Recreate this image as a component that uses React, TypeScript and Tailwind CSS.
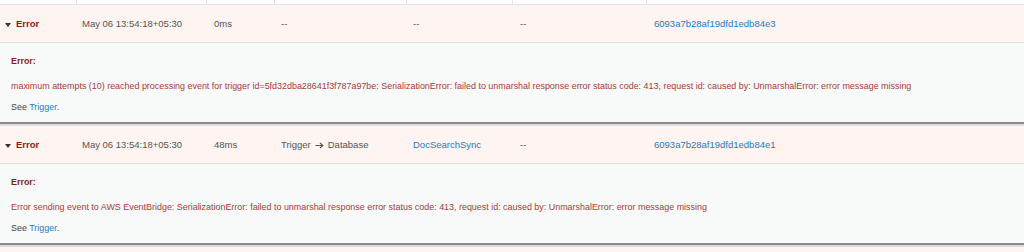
const font = { fontFamily: '"Liberation Sans", Arial, sans-serif' };

const rows = [
  {
    time: "May 06 13:54:18+05:30",
    duration: "0ms",
    source: null as null | string,
    name: null as null | string,
    id: "6093a7b28af19dfd1edb84e3",
    message:
      "maximum attempts (10) reached processing event for trigger id=5fd32dba28641f3f787a97be: SerializationError: failed to unmarshal response error status code: 413, request id: caused by: UnmarshalError: error message missing",
  },
  {
    time: "May 06 13:54:18+05:30",
    duration: "48ms",
    source: "Trigger",
    name: "DocSearchSync",
    id: "6093a7b28af19dfd1edb84e1",
    message:
      "Error sending event to AWS EventBridge: SerializationError: failed to unmarshal response error status code: 413, request id: caused by: UnmarshalError: error message missing",
  },
];

const cols = "grid grid-cols-[77px_130px_68px_132px_106px_134px_1fr]";

function Row({ row }: any) {
  return (
    <div>
      <div className={`${cols} h-[38px] pt-[2px] items-center bg-[#fef4f2] border-b border-[#dedede] text-[9.5px] text-[#555]`}>
        <div className="flex items-center pl-[5px]">
          <svg width="6" height="4" viewBox="0 0 6 4" className="mr-[5px]">
            <path d="M0 0 L6 0 L3 4 Z" fill="#333" />
          </svg>
          <span className="font-bold text-[#8b1a1a]">Error</span>
        </div>
        <div className="pl-[5px]">{row.time}</div>
        <div className="pl-[7px]">{row.duration}</div>
        <div className="pl-[6px] flex items-center">
          {row.source ? (
            <>
              <span>{row.source}</span>
              <svg width="9" height="7" viewBox="0 0 9 7" className="mx-[4px]">
                <path d="M0.5 3.5 H7.5 M5 1 L7.8 3.5 L5 6" stroke="#555" strokeWidth="1.1" fill="none" />
              </svg>
              <span>Database</span>
            </>
          ) : (
            "--"
          )}
        </div>
        <div className="pl-[6px]">
          {row.name ? <span className="text-[#1f7bc6]">{row.name}</span> : "--"}
        </div>
        <div className="pl-[7px]">--</div>
        <div className="pl-[7px] text-[#1f7bc6]">{row.id}</div>
      </div>
      <div className="h-[79px] bg-[#f8faf9] pl-[11px] pt-[13px] text-[8.93px] leading-[11px]">
        <div className="font-bold text-[#8b1a1a] mb-[14px]">Error:</div>
        <div className="text-[#a63c3a] mb-[10px]">{row.message}</div>
        <div className="text-[#444]">
          See <span className="text-[#1f7bc6]">Trigger</span>.
        </div>
      </div>
      <div className="h-[2px] bg-[#8a8a8a]" />
      <div className="h-[2px] bg-[#dcdcdc]" />
    </div>
  );
}

export default function App() {
  return (
    <div className="w-[1024px] h-[252px] overflow-hidden bg-white" style={font}>
      <div className={`${cols} h-[4px]`}>
        <div className="border-r border-[#e6e6e6]" />
        <div className="border-r border-[#e6e6e6]" />
        <div className="border-r border-[#e6e6e6]" />
        <div className="border-r border-[#e6e6e6]" />
        <div className="border-r border-[#e6e6e6]" />
        <div className="border-r border-[#e6e6e6]" />
        <div />
      </div>
      <div className="h-[1px] bg-[#e2e2e2]" />
      {rows.map((r) => (
        <Row key={r.id} row={r} />
      ))}
      <div className="h-[10px] bg-[#fef4f2]" />
    </div>
  );
}
